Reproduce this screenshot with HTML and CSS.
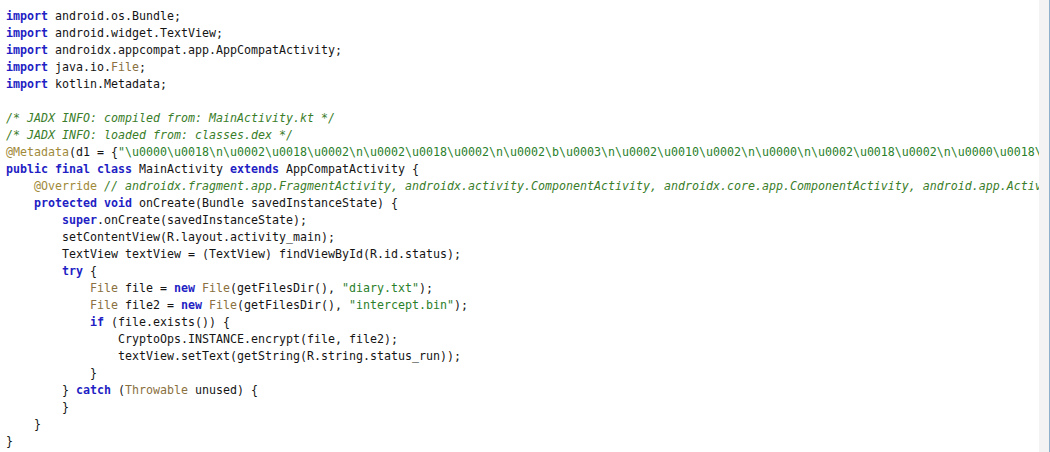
FILE: index.html
```html
<!DOCTYPE html>
<html>
<head>
<meta charset="utf-8">
<link rel="stylesheet" href="styles.css">
</head>
<body>
<div class="editor">
<pre class="code"><span class="kw">import</span> android.os.Bundle;
<span class="kw">import</span> android.widget.TextView;
<span class="kw">import</span> androidx.appcompat.app.AppCompatActivity;
<span class="kw">import</span> java.io.<span class="ty">File</span>;
<span class="kw">import</span> kotlin.Metadata;

<span class="cm">/* JADX INFO: compiled from: MainActivity.kt */</span>
<span class="cm">/* JADX INFO: loaded from: classes.dex */</span>
<span class="an">@Metadata</span>(d1 = {<span class="st">"\u0000\u0018\n\u0002\u0018\u0002\n\u0002\u0018\u0002\n\u0002\b\u0003\n\u0002\u0010\u0002\n\u0000\n\u0002\u0018\u0002\n\u0000\u0018\u0002\n\u0002\u0018\u0002\n\u0000"</span>}, d2 = {<span class="st">"Lcom/example/MainActivity;"</span>})
<span class="kw">public</span> <span class="kw">final</span> <span class="kw">class</span> MainActivity <span class="kw">extends</span> AppCompatActivity {
    <span class="an">@Override</span> <span class="cm">// androidx.fragment.app.FragmentActivity, androidx.activity.ComponentActivity, androidx.core.app.ComponentActivity, android.app.Activity</span>
    <span class="kw">protected</span> <span class="kw">void</span> onCreate(Bundle savedInstanceState) {
        <span class="kw">super</span>.onCreate(savedInstanceState);
        setContentView(R.layout.activity_main);
        TextView textView = (TextView) findViewById(R.id.status);
        <span class="kw">try</span> {
            <span class="ty">File</span> file = <span class="kw">new</span> <span class="ty">File</span>(getFilesDir(), <span class="st">"diary.txt"</span>);
            <span class="ty">File</span> file2 = <span class="kw">new</span> <span class="ty">File</span>(getFilesDir(), <span class="st">"intercept.bin"</span>);
            <span class="kw">if</span> (file.exists()) {
                CryptoOps.INSTANCE.encrypt(file, file2);
                textView.setText(getString(R.string.status_run));
            }
        } <span class="kw">catch</span> (<span class="ty">Throwable</span> unused) {
        }
    }
}</pre>
<div class="scrollbar"></div>
</div>
</body>
</html>
```

FILE: styles.css
```css
html, body {
  margin: 0;
  padding: 0;
  background: #ffffff;
}

.editor {
  display: flex;
  width: 1050px;
  height: 452px;
  overflow: hidden;
}

.code {
  flex: 1;
  min-width: 0;
  margin: 0;
  padding: 8px 0 0 6px;
  overflow: hidden;
  white-space: pre;
  font-family: "DejaVu Sans Mono", "Liberation Mono", monospace;
  font-size: 11.63px;
  line-height: 17px;
  color: #141414;
}

.kw {
  color: #1f1fc4;
  font-weight: bold;
}

.ty {
  color: #8a7040;
}

.st {
  color: #2a7f2a;
}

.cm {
  color: #3a7d2a;
  font-style: italic;
}

.an {
  color: #a08a3a;
}

.scrollbar {
  flex: 0 0 10px;
  background: #f3f3f3;
  border-right: 1px solid #8fb0cc;
}
```
